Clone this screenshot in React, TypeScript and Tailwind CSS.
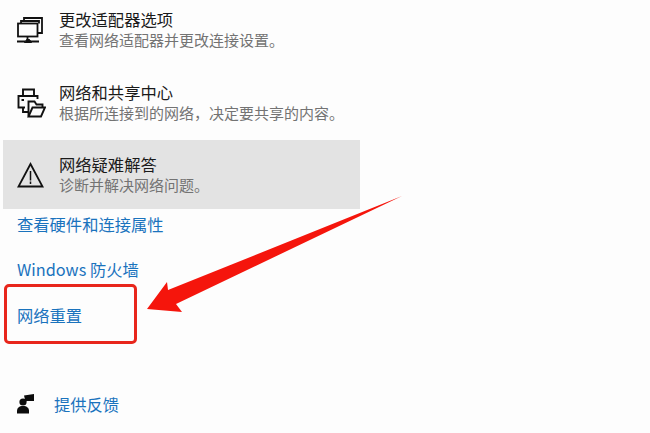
import React from 'react';

const cjk = 'font-["Noto_Sans_CJK_SC","Liberation_Sans",sans-serif]';

function AdapterIcon() {
  return (
    <svg width="26" height="26" viewBox="0 0 26 26" fill="none" stroke="#111" strokeWidth="1.8">
      <path d="M7 3.5V1h18v15h-4" />
      <path d="M4 6.5V4h18v2.5" />
      <rect x="1" y="6.5" width="19.5" height="13" />
      <path d="M10.5 19.5v3" />
      <path d="M0 24.5h8M13 24.5h9" />
      <path d="M7.5 25.5l2-3h3l2 3z" fill="#111" strokeWidth="1" />
    </svg>
  );
}

function SharingIcon() {
  return (
    <svg width="29" height="30" viewBox="0 0 29 30" fill="none" stroke="#111" strokeWidth="1.9">
      <path d="M6 8V1.5h11V8" />
      <path d="M8 19.5H1.5V8h19v3" />
      <path d="M4.5 12h2.5" strokeWidth="2" />
      <path d="M6 19.5v4.5h5" />
      <path d="M11.5 28V13.5h6l2 3h6v3" />
      <path d="M11.5 28.5l4-9h12.5l-4 9z" />
    </svg>
  );
}

function WarningIcon() {
  return (
    <svg width="27" height="26" viewBox="0 0 27 26" fill="none" stroke="#111" strokeWidth="1.8">
      <path d="M13.5 2L1.5 24.5h24z" strokeLinejoin="miter" />
      <path d="M13.5 9v9.5M13.5 19.5v2.5" strokeWidth="1.5" />
    </svg>
  );
}

function FeedbackIcon() {
  return (
    <svg width="18" height="20" viewBox="0 0 18 20" fill="#0c0c0c">
      <circle cx="6" cy="8" r="3.6" />
      <path d="M0 19.5v-2.5c0-3 2-5 6-5s6 2 6 5v2.5z" />
      <path d="M7 1.5L17 0v7h-7l-3 1.5 1-3z" />
    </svg>
  );
}

function SettingRow({
  icon,
  title,
  desc,
  active,
}: {
  icon: React.ReactNode;
  title: string;
  desc: string;
  active?: boolean;
}) {
  return (
    <div className={`ml-[3px] w-[357px] h-[69px] flex items-center ${active ? 'bg-[#e3e3e3]' : ''}`}>
      <div className="w-[56px] pl-[14px] flex-none flex items-center">{icon}</div>
      <div className="whitespace-nowrap">
        <div className="text-[16.3px] leading-[21px] text-[#1a1a1a]">{title}</div>
        <div className="text-[15px] leading-[20px] text-[#737373]">{desc}</div>
      </div>
    </div>
  );
}

export default function App() {
  return (
    <div className={`relative w-[650px] h-[433px] overflow-hidden bg-[#fdfdfd] ${cjk}`}>
      <div className="flex flex-col">
        <div className="mt-[-5px]">
          <SettingRow icon={<AdapterIcon />} title="更改适配器选项" desc="查看网络适配器并更改连接设置。" />
        </div>
        <div className="mt-[4px]">
          <SettingRow icon={<SharingIcon />} title="网络和共享中心" desc="根据所连接到的网络，决定要共享的内容。" />
        </div>
        <div className="mt-[3px]">
          <SettingRow active icon={<WarningIcon />} title="网络疑难解答" desc="诊断并解决网络问题。" />
        </div>

        <div className="pl-[17px] flex flex-col text-[16.3px] leading-[24px] text-[#1a73bd]">
          <div className="mt-[3px]">查看硬件和连接属性</div>
          <div className="mt-[21px]">Windows 防火墙</div>
          <div className="mt-[22px]">网络重置</div>
        </div>

        <div className="mt-[65px] pl-[17px] flex items-center">
          <FeedbackIcon />
          <span className="ml-[19px] text-[16.3px] leading-[24px] text-[#1a73bd]">提供反馈</span>
        </div>
      </div>

      {/* red annotation over the screenshot */}
      <div className="absolute left-[4px] top-[284px] w-[133px] h-[60px] border-[3.5px] border-[#e8261c] rounded-[5px]" />
      <svg className="absolute left-0 top-0" width="650" height="433" viewBox="0 0 650 433">
        <polygon points="402,196 168,290 167,282 147,309 182,312 176,304" fill="#f5150c" />
      </svg>
    </div>
  );
}
